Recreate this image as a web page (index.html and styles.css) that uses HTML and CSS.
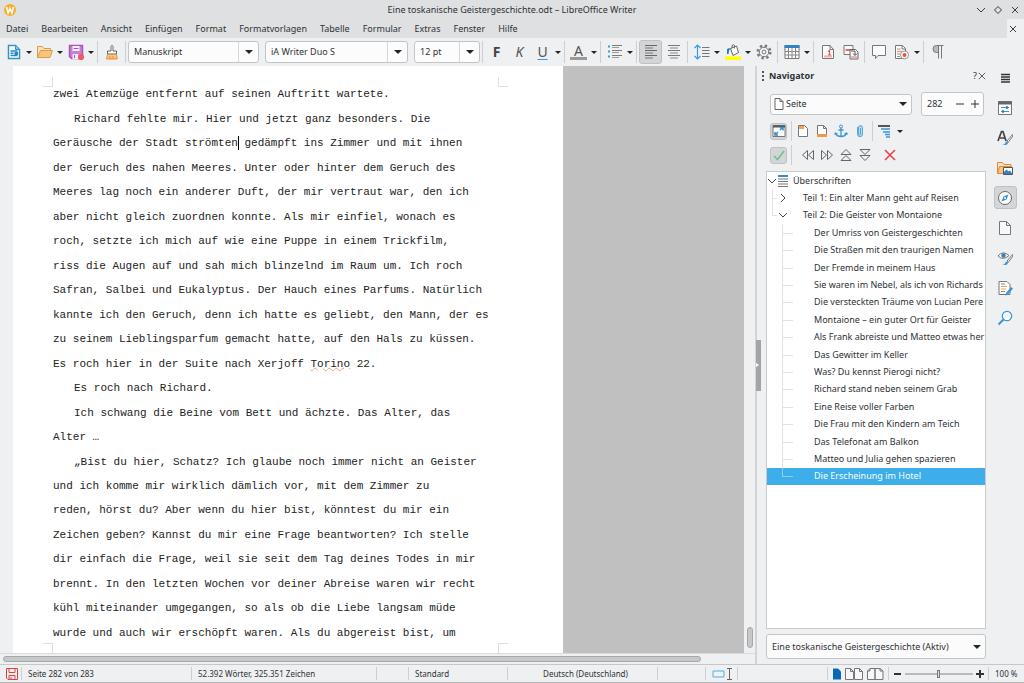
FILE: index.html
```
<!DOCTYPE html>
<html lang="de">
<head>
  <meta charset="UTF-8" />
  <meta name="viewport" content="width=device-width, initial-scale=1.0"/>
  <title>Eine toskanische Geistergeschichte.odt – LibreOffice Writer</title>
  <link rel="stylesheet" href="styles.css">
</head>
<body>

  <header class="titlebar">
    <svg class="app-icon" viewBox="0 0 12 12"><circle cx="6" cy="6" r="6" fill="#f5b02e"/><path d="M2.500 3l1.600 6L6 4.500 7.900 9l1.600-6" fill="none" stroke="#fff" stroke-width="1.500"/></svg>
    <h1>Eine toskanische Geistergeschichte.odt – LibreOffice Writer</h1>
    <div class="window-buttons">
      <button aria-label="Minimieren"><svg viewBox="0 0 10 10"><path d="M1 3l4 4 4-4"/></svg></button>
      <button aria-label="Maximieren"><svg viewBox="0 0 10 10"><path d="M5 1.500l3.500 3.500L5 8.500 1.500 5z"/></svg></button>
      <button aria-label="Beenden"><svg viewBox="0 0 10 10"><path d="M2 2l6 6M8 2L2 8"/></svg></button>
    </div>
  </header>

  <nav class="menubar">
    <a href="#datei">Datei</a>
    <a href="#bearbeiten">Bearbeiten</a>
    <a href="#ansicht">Ansicht</a>
    <a href="#einfuegen">Einfügen</a>
    <a href="#format">Format</a>
    <a href="#vorlagen">Formatvorlagen</a>
    <a href="#tabelle">Tabelle</a>
    <a href="#formular">Formular</a>
    <a href="#extras">Extras</a>
    <a href="#fenster">Fenster</a>
    <a href="#hilfe">Hilfe</a>
    <button class="close-doc" aria-label="Dokument schließen"><svg viewBox="0 0 10 10"><path d="M2 2l6 6M8 2L2 8"/></svg></button>
  </nav>

  <div class="toolbar">
    <button class="tb" aria-label="Neu"><svg viewBox="0 0 16 16"><path d="M2.500 1.500h7l4 4v9h-11z" fill="#fff" stroke="#3a8fc4" stroke-width="1.500"/><path d="M9.500 1.500v4h4" fill="#8cc4e8" stroke="#3a8fc4"/><path d="M4.500 7h7M4.500 11.500h7M4.500 9.200h3" stroke="#1e8bcd" stroke-width="1.500"/><path d="M8.500 8h3.500v3H8.500z" fill="#1e8bcd"/></svg></button>
    <button class="dd" aria-label="Mehr"></button>
    <button class="tb" aria-label="Öffnen"><svg viewBox="0 0 16 16"><path d="M.5 13.500v-11h5l1.500 2h6.500v2" fill="#fbe0b8" stroke="#d99a4e"/><path d="M.5 13.500l3-7h12l-2.500 7z" fill="#fac57c" stroke="#d99a4e"/></svg></button>
    <button class="dd" aria-label="Mehr"></button>
    <button class="tb" aria-label="Speichern"><svg viewBox="0 0 16 16"><path d="M1.500 1.500h13v13h-11l-2-2z" fill="#c77fd4" stroke="#a855b8" stroke-width="1.500"/><path d="M4.500 2h7v5h-7z" fill="#fbf2fc"/><path d="M4.500 10h6v5h-6z" fill="#f7e8fa"/><path d="M5.500 4.500h5M6.500 11v3" stroke="#a855b8"/><circle cx="13" cy="13" r="3" fill="#f05a5a"/></svg></button>
    <button class="dd" aria-label="Mehr"></button>
    <i class="sep"></i>
    <button class="tb" aria-label="Format übertragen"><svg viewBox="0 0 16 16"><path d="M7 7V2.500q1-2.500 2 0V7h3.500v3h-9V7z" fill="#fff" stroke="#666"/><path d="M3.500 10.500h9l.8 4.500H2.500z" fill="#fac57c" stroke="#dc9148"/><path d="M6 12v3M9 12v3" stroke="#dc9148"/></svg></button>
    <i class="sep"></i>

    <div class="combo style-name"><input type="text" value="Manuskript" aria-label="Absatzvorlage"><button aria-label="Vorlagen zeigen"></button></div>
    <div class="combo font-name"><input type="text" value="iA Writer Duo S" aria-label="Schriftname"><button aria-label="Schriften zeigen"></button></div>
    <div class="combo font-size"><input type="text" value="12 pt" aria-label="Schriftgröße"><button aria-label="Größen zeigen"></button></div>

    <i class="sep"></i>
    <button class="tb bold">F</button>
    <button class="tb italic">K</button>
    <button class="tb underline">U</button>
    <button class="dd" aria-label="Mehr"></button>
    <i class="sep"></i>
    <button class="tb color">A</button>
    <button class="dd" aria-label="Mehr"></button>
    <i class="sep"></i>
    <button class="tb" aria-label="Liste"><svg viewBox="0 0 16 16"><path d="M1 2.500h2M1 7.500h2M1 12.500h2" stroke="#3a9bdc" stroke-width="2"/><path d="M5 1.500h10M5 6.500h10M5 11.500h10" stroke="#7a7a7a"/><path d="M5 3.500h7M5 8.500h7M5 13.500h7" stroke="#9a9a9a"/></svg></button>
    <button class="dd" aria-label="Mehr"></button>
    <i class="sep"></i>
    <button class="tb active" aria-label="Linksbündig"><svg viewBox="0 0 16 16"><path d="M2 1.500h12M2 6.500h12M2 11.500h12" stroke="#666"/><path d="M2 4h8M2 9h8M2 14h8" stroke="#777"/></svg></button>
    <button class="tb" aria-label="Zentriert"><svg viewBox="0 0 16 16"><path d="M2 1.500h12M2 6.500h12M2 11.500h12" stroke="#777"/><path d="M4 4h8M4 9h8M4 14h8" stroke="#888"/></svg></button>
    <i class="sep"></i>
    <button class="tb" aria-label="Zeilenabstand"><svg viewBox="0 0 16 16"><path d="M3.500 1v14M.5 4l3-3 3 3M.5 12l3 3 3-3" fill="none" stroke="#3a9bdc" stroke-width="1.200"/><path d="M8 3.500h7.500M8 6.500h7.500M8 9.500h7.500M8 12.500h7.500" stroke="#777"/></svg></button>
    <button class="dd" aria-label="Mehr"></button>
    <button class="tb" aria-label="Hintergrundfarbe"><svg viewBox="0 0 16 16"><path d="M0 12.500h16v3.500H0z" fill="#ffff00"/><path d="M5.500 4.500l6-2.500 2 6.500-5.500 3z" fill="#fff" stroke="#666"/><path d="M7 4.500V1.500q1.500-1.500 2.500 0v3" fill="none" stroke="#666"/><path d="M2 10V5.500q1-2 3.500-1L4 6.500 3.500 10z" fill="#1e78be"/></svg></button>
    <button class="dd" aria-label="Mehr"></button>
    <button class="tb" aria-label="Einstellungen"><svg viewBox="0 0 16 16"><circle cx="8" cy="8" r="6.300" fill="none" stroke="#777" stroke-width="2.400" stroke-dasharray="2.400 2.548"/><circle cx="8" cy="8" r="4.700" fill="#f7f7f7" stroke="#777"/><circle cx="8" cy="8" r="2" fill="#eff0f1" stroke="#777"/></svg></button>
    <i class="sep"></i>
    <button class="tb" aria-label="Tabelle"><svg viewBox="0 0 16 16"><path d="M1 1.500h14v13H1z" fill="#fff" stroke="#777"/><path d="M.5 1h15v3H.5z" fill="#2f83c5"/><path d="M1 7.500h14M1 11h14M4.500 4v10.500M8 4v10.500M11.500 4v10.500" stroke="#888"/></svg></button>
    <button class="dd" aria-label="Mehr"></button>
    <i class="sep"></i>
    <button class="tb" aria-label="Seitenumbruch"><svg viewBox="0 0 16 16"><path d="M2.500 1.500h7.500l3.500 4v9h-11z" fill="#fafafa" stroke="#777"/><path d="M10 1.500v4h3.500" fill="none" stroke="#777"/><path d="M4 12.500h8" stroke="#f3b0b0" stroke-width="2"/><path d="M8 7.500l1.500-1v4.500M8 11h3" fill="none" stroke="#ed4f4f" stroke-width="1.200"/></svg></button>
    <button class="tb" aria-label="Querverweis"><svg viewBox="0 0 16 16"><path d="M1 1.500h9v9H1z" fill="#fafafa" stroke="#777"/><path d="M7 5.500h5.500l2.500 2.500v7H7z" fill="#fafafa" stroke="#666"/><path d="M2.500 6h5" stroke="#e03c3c" stroke-width="1.500"/><path d="M8 13h6" stroke="#f3b0b0" stroke-width="2"/><path d="M8 7h4v4M10 9.500l2 2 2-2" fill="none" stroke="#555"/></svg></button>
    <i class="sep"></i>
    <button class="tb" aria-label="Kommentar"><svg viewBox="0 0 16 16"><path d="M1.500 1.500h13v10H7l-2.500 3v-3h-3z" fill="#fdfdfd" stroke="#777"/></svg></button>
    <button class="tb" aria-label="Änderungen"><svg viewBox="0 0 16 16"><path d="M1.500 1.500h7l3 3v10h-10z" fill="#fdfdfd" stroke="#777"/><path d="M8 1.500v3.500h3.500" fill="none" stroke="#777"/><path d="M3 5h3.500M3 10h3M3 12.500h3" stroke="#999"/><path d="M3 7.500h5" stroke="#f0a050" stroke-width="1.500"/><circle cx="10.500" cy="11" r="4" fill="#fff" stroke="#999"/><circle cx="10.500" cy="11" r="2" fill="#ed4f4f"/></svg></button>
    <button class="dd" aria-label="Mehr"></button>
    <i class="sep"></i>
    <button class="tb" aria-label="Formatierungszeichen"><svg viewBox="0 0 16 16"><path d="M8 8.500H6.500a3.500 3.500 0 010-7H8z" fill="#bbb"/><path d="M13.500 1.500h-7a3.500 3.500 0 000 7h1.700M8.500 1.500v13M11.500 1.500v13" fill="none" stroke="#777"/></svg></button>
  </div>

  <main class="workspace">
    <div class="doc-column">
      <div class="doc-view">
        <div class="page" contenteditable="true" spellcheck="false">
          <i class="mark tl"></i><i class="mark tr"></i><i class="mark bl"></i><i class="mark br"></i>
          <p><span>zwei Atemzüge entfernt auf seinen Auftritt wartete.</span></p>
          <p>
            <span class="indent">Richard fehlte mir. Hier und jetzt ganz besonders. Die</span>
            <span>Geräusche der Stadt strömten<i class="caret"></i> gedämpft ins Zimmer und mit ihnen</span>
            <span>der Geruch des nahen Meeres. Unter oder hinter dem Geruch des</span>
            <span>Meeres lag noch ein anderer Duft, der mir vertraut war, den ich</span>
            <span>aber nicht gleich zuordnen konnte. Als mir einfiel, wonach es</span>
            <span>roch, setzte ich mich auf wie eine Puppe in einem Trickfilm,</span>
            <span>riss die Augen auf und sah mich blinzelnd im Raum um. Ich roch</span>
            <span>Safran, Salbei und Eukalyptus. Der Hauch eines Parfums. Natürlich</span>
            <span>kannte ich den Geruch, denn ich hatte es geliebt, den Mann, der es</span>
            <span>zu seinem Lieblingsparfum gemacht hatte, auf den Hals zu küssen.</span>
            <span>Es roch hier in der Suite nach Xerjoff <u>Torino</u> 22.</span>
          </p>
          <p><span class="indent">Es roch nach Richard.</span></p>
          <p>
            <span class="indent">Ich schwang die Beine vom Bett und ächzte. Das Alter, das</span>
            <span>Alter …</span>
          </p>
          <p>
            <span class="indent">„Bist du hier, Schatz? Ich glaube noch immer nicht an Geister</span>
            <span>und ich komme mir wirklich dämlich vor, mit dem Zimmer zu</span>
            <span>reden, hörst du? Aber wenn du hier bist, könntest du mir ein</span>
            <span>Zeichen geben? Kannst du mir eine Frage beantworten? Ich stelle</span>
            <span>dir einfach die Frage, weil sie seit dem Tag deines Todes in mir</span>
            <span>brennt. In den letzten Wochen vor deiner Abreise waren wir recht</span>
            <span>kühl miteinander umgegangen, so als ob die Liebe langsam müde</span>
            <span>wurde und auch wir erschöpft waren. Als du abgereist bist, um</span>
          </p>
        </div>
        <div class="backdrop"></div>
        <div class="vscroll"><i></i></div>
      </div>
      <div class="hscroll"><i></i></div>
    </div>

    <button class="splitter" aria-label="Seitenleiste ausblenden"><i></i></button>

    <aside class="navigator">
      <div class="panel-title">
        <i class="grip"></i>
        <h2>Navigator</h2>
        <button>?</button>
        <button aria-label="Schließen"><svg viewBox="0 0 10 10"><path d="M1 1l8 8M9 1L1 9"/></svg></button>
      </div>

      <div class="goto">
        <div class="select-wrap">
          <svg viewBox="0 0 10 12"><path d="M1 .5h5l3 3v8H1zM6 .5v3h3" fill="#fff" stroke="#666"/></svg>
          <select aria-label="Navigieren nach"><option>Seite</option></select>
        </div>
        <div class="spin">
          <input type="text" value="282" aria-label="Seitennummer">
          <button aria-label="Weniger"><svg viewBox="0 0 10 10"><path d="M1 5h8"/></svg></button>
          <button aria-label="Mehr"><svg viewBox="0 0 10 10"><path d="M1 5h8M5 1v8"/></svg></button>
        </div>
      </div>

      <div class="nav-tools">
        <button class="nt active" aria-label="Navigationsansicht"><svg viewBox="0 0 14 14"><path d="M1 1.500h12v11H1z" fill="#fff" stroke="#777"/><path d="M1 2.500h12" stroke="#555" stroke-width="2"/><path d="M3 11l3-3M3 8v3h3M8 6l3-3M8 3.500h3v3" fill="none" stroke="#2f8fd0" stroke-width="1.500"/></svg></button>
        <i class="sep"></i>
        <button class="nt" aria-label="Kopfzeile"><svg viewBox="0 0 14 14"><path d="M2.500 1.500h6l3 3v8h-9z" fill="#fff" stroke="#777"/><path d="M3 2h5v3H3z" fill="#f6a354"/></svg></button>
        <button class="nt" aria-label="Fußzeile"><svg viewBox="0 0 14 14"><path d="M2.500 1.500h6l3 3v8h-9zM8.500 1.500v3h3" fill="#fff" stroke="#777"/><path d="M2 10h10v3H2z" fill="#f09a48"/></svg></button>
        <button class="nt" aria-label="Anker"><svg viewBox="0 0 14 14"><circle cx="7" cy="2.500" r="1.500" fill="none" stroke="#3a95d5"/><path d="M7 4v8.500M4.500 6h5M1.500 9q1 3.500 5.500 3.500T12.500 9M.5 10.500L1.500 9l2 1M10.500 10l2-1 1 1.500" fill="none" stroke="#3a95d5" stroke-width="1.300"/></svg></button>
        <button class="nt" aria-label="Erinnerung"><svg viewBox="0 0 14 14"><path d="M7.500 4v6a1 1 0 01-2 0V3.500a2 2 0 014 0V10a2.500 2.500 0 01-5 .5V3" fill="#b5d7f0" stroke="#5aa9dc"/></svg></button>
        <i class="sep"></i>
        <button class="nt" aria-label="Überschriftenebenen"><svg viewBox="0 0 14 14"><path d="M1 2h12" stroke="#555" stroke-width="2"/><path d="M4 5h9M6 8h7M8 10.500h5M9 13h4" stroke="#3a95d5" stroke-width="1.500"/></svg></button>
        <button class="dd" aria-label="Mehr"></button>
      </div>
      <div class="nav-tools moves">
        <button class="nt active" aria-label="Inhalte"><svg viewBox="0 0 14 14"><path d="M2 8l3.500 3.500L12 3" fill="none" stroke="#6cc192" stroke-width="1.500"/></svg></button>
        <i class="sep"></i>
        <button class="nt" aria-label="Zurück"><svg viewBox="0 0 14 14"><path d="M6.500 2.500v9L1.500 7zM12.500 2.500v9L7.500 7z" fill="none" stroke="#666"/></svg></button>
        <button class="nt" aria-label="Weiter"><svg viewBox="0 0 14 14"><path d="M1.500 2.500v9l5-4.500zM7.500 2.500v9l5-4.500z" fill="none" stroke="#666"/></svg></button>
        <button class="nt" aria-label="Nach oben"><svg viewBox="0 0 14 14"><path d="M2 6.500h10L7 1.500zM2 12.500h10L7 7.500z" fill="none" stroke="#666"/></svg></button>
        <button class="nt" aria-label="Nach unten"><svg viewBox="0 0 14 14"><path d="M2 1.500h10L7 6.500zM2 7.500h10l-5 5z" fill="none" stroke="#666"/></svg></button>
        <button class="nt delete" aria-label="Löschen"><svg viewBox="0 0 14 14"><path d="M2 2l10 10M12 2L2 12" stroke="#ed3d3b" stroke-width="1.500"/></svg></button>
      </div>

      <div class="tree-box">
        <ul class="tree" role="tree">
          <li class="root"><svg viewBox="0 0 10 10"><path d="M1 3l4 4 4-4"/></svg><svg class="list-icon" viewBox="0 0 10 12"><path d="M0 1h10" stroke="#2f8fd0" stroke-width="2"/><path d="M0 4h10M0 6.500h10M0 9h10M0 11.500h10" stroke="#777"/></svg>Überschriften</li>
          <li class="part"><svg viewBox="0 0 10 10"><path d="M3 1l4 4-4 4"/></svg>Teil 1: Ein alter Mann geht auf Reisen</li>
          <li class="part last"><svg viewBox="0 0 10 10"><path d="M1 3l4 4 4-4"/></svg>Teil 2: Die Geister von Montaione</li>
          <li class="leaf">Der Umriss von Geistergeschichten</li>
          <li class="leaf">Die Straßen mit den traurigen Namen</li>
          <li class="leaf">Der Fremde in meinem Haus</li>
          <li class="leaf">Sie waren im Nebel, als ich von Richards G</li>
          <li class="leaf">Die versteckten Träume von Lucian Pere</li>
          <li class="leaf">Montaione – ein guter Ort für Geister</li>
          <li class="leaf">Als Frank abreiste und Matteo etwas her</li>
          <li class="leaf">Das Gewitter im Keller</li>
          <li class="leaf">Was? Du kennst Pierogi nicht?</li>
          <li class="leaf">Richard stand neben seinem Grab</li>
          <li class="leaf">Eine Reise voller Farben</li>
          <li class="leaf">Die Frau mit den Kindern am Teich</li>
          <li class="leaf">Das Telefonat am Balkon</li>
          <li class="leaf">Matteo und Julia gehen spazieren</li>
          <li class="leaf last selected">Die Erscheinung im Hotel</li>
        </ul>
      </div>

      <div class="select-wrap document">
        <select aria-label="Aktives Fenster"><option>Eine toskanische Geistergeschichte (Aktiv)</option></select>
      </div>
    </aside>

    <div class="deck-tabs">
      <button aria-label="Menü"><svg viewBox="0 0 16 16"><path d="M4 4.500h9M4 7h9M4 9.500h9M4 12h9" stroke="#333" stroke-width="1.500"/></svg></button>
      <button aria-label="Eigenschaften"><svg viewBox="0 0 16 16"><path d="M1.500 1.500h13v13h-13z" fill="#fff" stroke="#777"/><path d="M1 3h14" stroke="#666" stroke-width="3"/><path d="M4 7.500h8M4 11.500h8" stroke="#3a95d5"/><path d="M10 6v3M6 10v3" stroke="#1e78be" stroke-width="1.500"/></svg></button>
      <button aria-label="Formatvorlagen"><svg viewBox="0 0 16 16"><path d="M1 11L4.500 1.500H6L9 11M3 8h5" fill="none" stroke="#444" stroke-width="1.700"/><path d="M15.500 4.500L10 11l1 1.500 5-6.500z" fill="#fff" stroke="#777"/><path d="M4.500 15q3.500 0 4.500-3.500l2 1q.5 3-6.500 2.500z" fill="#3a95d5"/></svg></button>
      <button aria-label="Galerie"><svg viewBox="0 0 16 16"><path d="M.5 13.500v-11h5l1.500 2h7v2" fill="#fbe0b8" stroke="#dc8a3c"/><path d="M.5 13.500l2-7h12v7z" fill="#fac57c" stroke="#dc8a3c"/><path d="M6.500 7.500h9v7h-9z" fill="#fff" stroke="#555"/><path d="M7 14v-2l2.500-2.500 2 2 1.500-1 2.500 3.500z" fill="#2f83c5"/></svg></button>
      <button class="active" aria-label="Navigator"><svg viewBox="0 0 16 16"><circle cx="8" cy="8" r="6.500" fill="#fff" stroke="#666"/><path d="M11.500 4.500L9.500 9.500l-5 2 2-5z" fill="#2f8fd0"/><circle cx="8" cy="8" r="1" fill="#fff"/></svg></button>
      <button aria-label="Seite"><svg viewBox="0 0 16 16"><path d="M2.500 1.500h7l4 4v9h-11zM9.500 1.500v4h4" fill="#fafafa" stroke="#777"/></svg></button>
      <button aria-label="Stilinspektor"><svg viewBox="0 0 16 16"><path d="M1 6q5-6 11-.5Q6 11 1 6z" fill="#fff" stroke="#777"/><circle cx="6.500" cy="5.500" r="2.200" fill="#2f83c5"/><path d="M15.500 4.500L10 11l1 1.500 5-6.500z" fill="#fff" stroke="#777"/><path d="M4.500 15q3.500 0 4.500-3.500l2 1q.5 3-6.500 2.500z" fill="#3a95d5"/></svg></button>
      <button aria-label="Änderungen verwalten"><svg viewBox="0 0 16 16"><path d="M2 1.500h8l3 3v10H2z" fill="#fff" stroke="#777"/><path d="M4 4h4M4 11.500h4" stroke="#888"/><path d="M4 6.500h6M4 9h5" stroke="#f0a050"/><path d="M14 7l2 1.500-5 6-2.500 1 .5-2.500z" fill="#3a95d5"/></svg></button>
      <button aria-label="Suchen"><svg viewBox="0 0 16 16"><circle cx="10" cy="6" r="4.700" fill="#f5fafe" stroke="#3a95d5" stroke-width="1.200"/><path d="M6.500 9.500L1.500 14.500" stroke="#3a95d5" stroke-width="2"/></svg></button>
    </div>
  </main>

  <footer class="statusbar">
    <span class="st-save"><svg viewBox="0 0 12 12"><path d="M.5.5h11v11H2l-1.500-1.500zM3 .5v4h6v-4M3 11.500V7.500h6v4M5 9v2" fill="none" stroke="#d8443f"/></svg></span>
    <span class="st-page">Seite 282 von 283</span>
    <span class="st-words">52.392 Wörter, 325.351 Zeichen</span>
    <span class="st-blank"></span>
    <span class="st-style">Standard</span>
    <span class="st-lang">Deutsch (Deutschland)</span>
    <span class="st-insert"></span>
    <span class="st-select"><svg viewBox="0 0 20 12"><path d="M1 3h11v6H1z" fill="#eaf4fb" stroke="#5aa9dc"/><path d="M15 .5h5M15 11.500h5M17.500.5v11" stroke="#666"/></svg></span>
    <span class="st-sign"></span>
    <span class="st-view"><svg viewBox="0 0 52 12"><path d="M1 .5h5l3 3v8H1z" fill="#0a66b7"/><path d="M13.500.5h5l3 3v8h-8zM18.500.5v3h3M22.500.5h5l3 3v8h-8zM27.500.5v3h3M35.500 3l2.500-2.500h5v11h-7.500zM43 .5h5L51 3v8.500h-8zM38 .5V3h-2.500M48 .5V3h3" fill="#f7f7f7" stroke="#777"/></svg></span>
    <span class="st-zoom">
      <button aria-label="Verkleinern"><svg viewBox="0 0 10 10"><path d="M1 5h7"/></svg></button>
      <input type="range" min="0" max="100" value="49" aria-label="Maßstab">
      <button aria-label="Vergrößern"><svg viewBox="0 0 10 10"><path d="M1 5h8M5 1v8"/></svg></button>
    </span>
    <span class="st-percent">100 %</span>
  </footer>

</body>
</html>
```
FILE: styles.css
```
* {
  box-sizing: border-box;
}
body {
  margin: 0;
  height: 100vh;
  display: flex;
  flex-direction: column;
  overflow: hidden;
  font-family: "Noto Sans", sans-serif;
  font-size: 9px;
  line-height: 14px;
  color: #2e3235;
  background: #eff0f1;
}
button, input, select {
  font: inherit;
  color: inherit;
  margin: 0;
  padding: 0;
  border: none;
  background: none;
}
input, select {
  min-width: 0;
  outline: none;
}
button {
  display: flex;
  align-items: center;
  justify-content: center;
  flex: none;
}
svg {
  display: block;
  flex: none;
}

/* title and menu */
.titlebar {
  height: 19px;
  flex: none;
  display: flex;
  align-items: center;
  padding: 0 4px;
  background: #dee0e2;
}
.app-icon {
  width: 12px;
  height: 12px;
}
.titlebar h1 {
  flex: 1;
  margin: 0;
  padding-left: 32px;
  font-size: 9px;
  font-weight: 400;
  text-align: center;
}
.window-buttons {
  display: flex;
  gap: 7px;
}
.titlebar button svg, .menubar button svg, .panel-title button svg {
  width: 10px;
  height: 10px;
  fill: none;
  stroke: #3a3e41;
}
.menubar {
  height: 19px;
  flex: none;
  display: flex;
  align-items: center;
  gap: 13px;
  padding-left: 6px;
  background: #dee0e2;
}
.menubar a {
  color: inherit;
  text-decoration: none;
}
.close-doc {
  width: 17px;
  height: 19px;
  margin-left: auto;
  padding-right: 6px;
  background: #eff0f1;
}

/* toolbar */
.toolbar {
  height: 28px;
  flex: none;
  display: flex;
  align-items: center;
  padding-left: 2px;
}
.tb {
  width: 23px;
  height: 24px;
  font-size: 14px;
  color: #555;
}
.tb svg {
  width: 16px;
  height: 16px;
}
.active {
  background: #d3d5d7;
  border: 1px solid #bfc1c3;
  border-radius: 3px;
}
.dd {
  width: 8px;
  height: 24px;
}
.dd::after, .combo button::after, .select-wrap::after {
  content: "";
  border: 3px solid transparent;
  border-top: 3px solid #232629;
  border-bottom: none;
}
.sep {
  width: 1px;
  height: 22px;
  margin: 0 2px;
  flex: none;
  background: #cdcfd1;
}
.bold {
  font-weight: 700;
  color: #444;
}
.italic {
  font-style: italic;
}
.underline {
  text-decoration: underline #3a9bdc;
  text-underline-offset: 2px;
}
.color {
  width: 17px;
  height: 16px;
  margin: 0 3px;
  line-height: 12px;
  border-bottom: 3px solid #999;
}
.combo {
  height: 22px;
  display: flex;
  margin-right: 6px;
  border: 1px solid #c3c5c7;
  border-radius: 3px;
  background: #fcfcfc;
}
.combo input {
  flex: 1;
  padding-left: 5px;
}
.combo button {
  width: 20px;
  border-left: 1px solid #d5d7d8;
}
.combo button::after, .select-wrap::after {
  border-width: 4px 4px 0;
}
.style-name {
  width: 131px;
}
.font-name {
  width: 143px;
}
.font-size {
  width: 66px;
  margin-right: 0;
}

/* document */
.workspace {
  flex: 1;
  min-height: 0;
  display: flex;
}
.doc-column {
  flex: 1;
  min-width: 0;
  display: flex;
  flex-direction: column;
}
.doc-view {
  flex: 1;
  min-height: 0;
  display: flex;
  padding-left: 13px;
}
.page {
  position: relative;
  width: 550px;
  display: flex;
  flex-direction: column;
  padding: 16px 0 8px 40px;
  background: #fff;
  color: #222;
  font-family: "Liberation Mono", monospace;
  font-size: 11px;
  white-space: nowrap;
  outline: none;
}
.page p {
  display: contents;
}
.page span {
  flex: 1;
  display: flex;
  align-items: center;
  white-space: pre;
}
.page .indent {
  padding-left: 21px;
}
.page u {
  text-decoration: underline wavy #f0a078 1px;
  text-underline-offset: 0;
}
.caret {
  width: 1px;
  height: 14px;
  margin-right: -1px;
  background: #000;
}
.mark {
  position: absolute;
  width: 10px;
  height: 10px;
  border: 0 solid #dedede;
}
.tl, .tr {
  top: 11px;
  border-bottom-width: 1px;
}
.bl, .br {
  bottom: 0;
  border-top-width: 1px;
}
.tl, .bl {
  left: 30px;
  border-right-width: 1px;
}
.tr, .br {
  right: 55px;
  border-left-width: 1px;
}
.backdrop {
  flex: 1;
  background: #c0c0c0;
}
.vscroll {
  width: 11px;
  display: flex;
  align-items: flex-end;
  justify-content: center;
  padding-bottom: 5px;
}
.vscroll i {
  width: 6px;
  height: 21px;
  border: 1px solid #a5a7a9;
  border-radius: 3px;
  background: #c6c8ca;
}
.hscroll {
  height: 12px;
  flex: none;
  display: flex;
  align-items: center;
  padding-left: 3px;
  border-top: 1px solid #d9dbdc;
  border-bottom: 1px solid #c5c7c9;
}
.hscroll i {
  width: 698px;
  height: 6px;
  border: 1px solid #a5a7a9;
  border-radius: 3px;
  background: #c6c8ca;
}
.splitter {
  width: 7px;
  justify-content: flex-start;
  border-left: 2px solid #d2d4d6;
  border-bottom: 1px solid #c5c7c9;
}
.splitter i {
  width: 5px;
  height: 51px;
  display: flex;
  align-items: center;
  margin-left: -1px;
  background: #a2a4a6;
}
.splitter i::after {
  content: "";
  border: 2px solid transparent;
  border-left: 3px solid #fff;
  border-right: none;
}

/* navigator */
.navigator {
  width: 224px;
  display: flex;
  flex-direction: column;
  padding-bottom: 5px;
  border-bottom: 1px solid #c5c7c9;
}
.panel-title {
  height: 20px;
  display: flex;
  align-items: center;
}
.grip {
  width: 2px;
  height: 10px;
  border-left: 2px dotted #555;
}
.panel-title h2 {
  flex: 1;
  margin: 0 0 0 5px;
  font-size: 9px;
  font-weight: 700;
}
.panel-title button svg {
  width: 8px;
  height: 8px;
  margin-left: 1px;
}
.goto {
  display: flex;
  align-items: center;
  gap: 9px;
  padding: 6px 2px 0 8px;
}
.select-wrap {
  flex: 1;
  height: 21px;
  display: flex;
  align-items: center;
  gap: 2px;
  padding: 0 4px 0 3px;
  border: 1px solid #c3c5c7;
  border-radius: 3px;
  background: #fbfbfb;
}
.select-wrap svg {
  width: 10px;
  height: 12px;
}
.select-wrap select {
  flex: 1;
  appearance: none;
}
.spin {
  width: 63px;
  height: 24px;
  display: flex;
  padding-right: 1px;
  border: 1px solid #c3c5c7;
  border-radius: 3px;
  background: #fcfcfc;
}
.spin input {
  flex: 1;
  padding-left: 5px;
}
.spin button {
  width: 15px;
}
.spin svg, .st-zoom svg {
  width: 10px;
  height: 10px;
  fill: none;
  stroke: #333;
}
.nav-tools {
  height: 24px;
  display: flex;
  align-items: center;
  padding-left: 8px;
}
.goto + .nav-tools {
  margin-top: 3px;
}
.nt {
  width: 17px;
  height: 17px;
  margin-right: 2px;
}
.nt svg {
  width: 14px;
  height: 14px;
}
.nav-tools .sep {
  height: 20px;
  margin: 0 2px;
}
.moves .sep {
  margin-right: 7px;
}
.nav-tools .dd {
  margin-left: 2px;
}
.delete {
  margin-left: 6px;
}
.tree-box {
  flex: 1;
  min-height: 0;
  margin: 4px 0 5px 4px;
  overflow: hidden;
  border: 1px solid #c8cacc;
  background: #fff;
}
.tree {
  height: 313px;
  margin: 0;
  padding: 0;
  display: flex;
  flex-direction: column;
  list-style: none;
}
.tree li {
  flex: 1;
  position: relative;
  display: flex;
  align-items: center;
  white-space: nowrap;
}
.tree svg {
  width: 10px;
  height: 10px;
  fill: none;
  stroke: #444;
}
.tree .list-icon {
  height: 12px;
  margin: 0 5px 0 1px;
}
.tree .part {
  padding-left: 11px;
}
.tree .part svg {
  margin-right: 15px;
}
.tree .leaf {
  padding-left: 47px;
}
/* guide lines beside the entries */
.part::before, .leaf::before, .part::after, .leaf::after {
  content: "";
  position: absolute;
  top: 0;
  left: 5px;
  height: 100%;
  border-left: 1px solid #e2e2e2;
}
.part::after, .leaf::after {
  top: 50%;
  width: 5px;
  height: 0;
  border-left: none;
  border-top: 1px solid #e2e2e2;
}
.leaf::before, .leaf::after {
  left: 15px;
}
.leaf::after {
  width: 11px;
}
.part.last::before, .leaf.last::before {
  height: 50%;
}
.tree .selected {
  color: #fcfcfc;
  background: #3daee9;
}
.selected::before, .selected::after {
  border-color: #8fcdf0;
}
.document {
  flex: none;
  height: 25px;
  margin-left: 4px;
  padding-left: 5px;
}
.deck-tabs {
  width: 38px;
  display: flex;
  flex-direction: column;
  align-items: center;
  gap: 7px;
  border-bottom: 1px solid #c5c7c9;
}
.deck-tabs button {
  width: 23px;
  height: 23px;
}
.deck-tabs svg {
  width: 16px;
  height: 16px;
}

/* status bar */
.statusbar {
  height: 18px;
  flex: none;
  display: flex;
  align-items: center;
  font-size: 8px;
  border-bottom: 1px solid #b5b7b9;
}
.statusbar > span {
  height: 13px;
  display: flex;
  align-items: center;
  padding-left: 6px;
  border-right: 1px solid #cdcfd1;
}
.st-save {
  width: 22px;
}
.st-save svg {
  width: 12px;
  height: 12px;
}
.st-page {
  width: 170px;
}
.st-words {
  width: 185px;
}
.st-blank {
  width: 32px;
}
.st-style {
  width: 99px;
}
.statusbar .st-lang {
  width: 150px;
  justify-content: center;
}
.st-insert {
  width: 48px;
}
.st-select {
  width: 32px;
}
.st-select svg {
  width: 20px;
  height: 12px;
}
.st-sign {
  flex: 1;
}
.statusbar .st-view {
  width: 61px;
  padding-left: 4px;
}
.st-view svg {
  width: 52px;
  height: 12px;
}
.statusbar .st-zoom {
  width: 100px;
  padding: 0 3px 0 4px;
}
.st-zoom svg {
  stroke-width: 2;
}
.st-zoom input {
  flex: 1;
  margin: 0 2px;
  height: 12px;
  appearance: none;
}
.st-zoom input::-webkit-slider-runnable-track {
  height: 2px;
  background: #b8babc;
}
.st-zoom input::-webkit-slider-thumb {
  appearance: none;
  width: 3px;
  height: 8px;
  margin-top: -3px;
  border: 1px solid #777;
  background: #ddd;
}
.statusbar .st-percent {
  width: 35px;
  border: none;
}
```
